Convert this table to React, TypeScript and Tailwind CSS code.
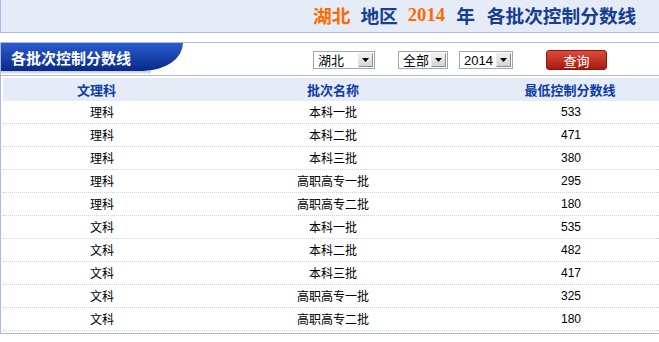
const rows: [string, string, string][] = [
  ["理科", "本科一批", "533"],
  ["理科", "本科二批", "471"],
  ["理科", "本科三批", "380"],
  ["理科", "高职高专一批", "295"],
  ["理科", "高职高专二批", "180"],
  ["文科", "本科一批", "535"],
  ["文科", "本科二批", "482"],
  ["文科", "本科三批", "417"],
  ["文科", "高职高专一批", "325"],
  ["文科", "高职高专二批", "180"],
];

const CJK = "font-['Noto_Sans_CJK_SC',sans-serif]";

function FakeSelect({ value, width }: { value: string; width: string }) {
  return (
    <div
      className={`${width} h-[18px] border border-[#9fa7b1] bg-white flex items-center justify-between`}
    >
      <span className="pl-[4px] text-[13px] leading-none text-black font-['Liberation_Sans','Noto_Sans_CJK_SC',sans-serif]">
        {value}
      </span>
      <span className="mr-[1px] w-[15px] h-[14px] border border-t-[#e8e8e8] border-l-[#e8e8e8] border-r-[#8c8c8c] border-b-[#8c8c8c] bg-gradient-to-b from-[#f2f2f2] to-[#d4d4d4] flex items-center justify-center">
        <svg width="7" height="4" viewBox="0 0 7 4">
          <polygon points="0,0 7,0 3.5,4" fill="#000" />
        </svg>
      </span>
    </div>
  );
}

export default function App() {
  return (
    <div className={`w-[659px] h-[342px] overflow-hidden bg-white ${CJK}`}>
      {/* page title bar */}
      <div className="h-[33px] bg-[#e5ebf7] border-l border-b border-[#a9bbe3] flex items-center pl-[312px] pb-[1px]">
        <span className="text-[18.7px] font-bold text-[#ff6a00]">湖北</span>
        <span className="ml-[10px] text-[18.7px] font-bold text-[#163e91]">地区</span>
        <span className="ml-[10px] text-[18.7px] font-bold text-[#ff6a00] font-['Liberation_Serif',serif]">
          2014
        </span>
        <span className="ml-[11px] text-[18.7px] font-bold text-[#163e91]">年</span>
        <span className="ml-[12px] text-[18.7px] font-bold text-[#163e91]">各批次控制分数线</span>
      </div>

      {/* content box */}
      <div className="mt-[9px] w-[680px] border border-[#a9bbe3]">
        <div className="h-[33px] border-b border-[#a9bbe3] flex items-start">
          <div className="w-[182px]">
            <div className="h-[28px] bg-gradient-to-b from-[#2b5ccf] to-[#08298b] rounded-br-[40px_28px] flex items-center pl-[10px]">
              <span className="text-[15px] font-bold text-white leading-none">各批次控制分数线</span>
            </div>
            <div className="w-[150px] h-[3px] bg-gradient-to-b from-[#c9c9c9] to-[#f3f3f3]" />
          </div>
          <div className="ml-[130px] mt-[8px]">
            <FakeSelect value="湖北" width="w-[62px]" />
          </div>
          <div className="ml-[23px] mt-[8px]">
            <FakeSelect value="全部" width="w-[50px]" />
          </div>
          <div className="ml-[11px] mt-[8px]">
            <FakeSelect value="2014" width="w-[54px]" />
          </div>
          <button className="ml-[33px] mt-[7px] w-[61px] h-[20px] rounded-[3px] border border-[#8e150b] bg-gradient-to-b from-[#dc4a3c] to-[#a8180d] text-white text-[13px] leading-none flex items-center justify-center">
            查询
          </button>
        </div>

        <div className="px-[2px] pt-[2px] pb-[2px]">
          <div className="grid grid-cols-[198px_264px_212px] h-[23px] bg-[#e5ebf7] items-center text-[13px] font-bold text-[#0d3ca6]">
            <div className="text-center pr-[11px]">文理科</div>
            <div className="text-center">批次名称</div>
            <div className="text-center pr-[2px]">最低控制分数线</div>
          </div>
          {rows.map(([kind, batch, score], i) => (
            <div
              key={i}
              className="grid grid-cols-[198px_264px_212px] h-[23px] items-center border-b border-dotted border-[#d0d0d0] text-[12px] text-black"
            >
              <div className="text-center">{kind}</div>
              <div className="text-center">{batch}</div>
              <div className="text-center text-[12px] font-['Liberation_Sans',sans-serif]">{score}</div>
            </div>
          ))}
        </div>
      </div>
    </div>
  );
}
